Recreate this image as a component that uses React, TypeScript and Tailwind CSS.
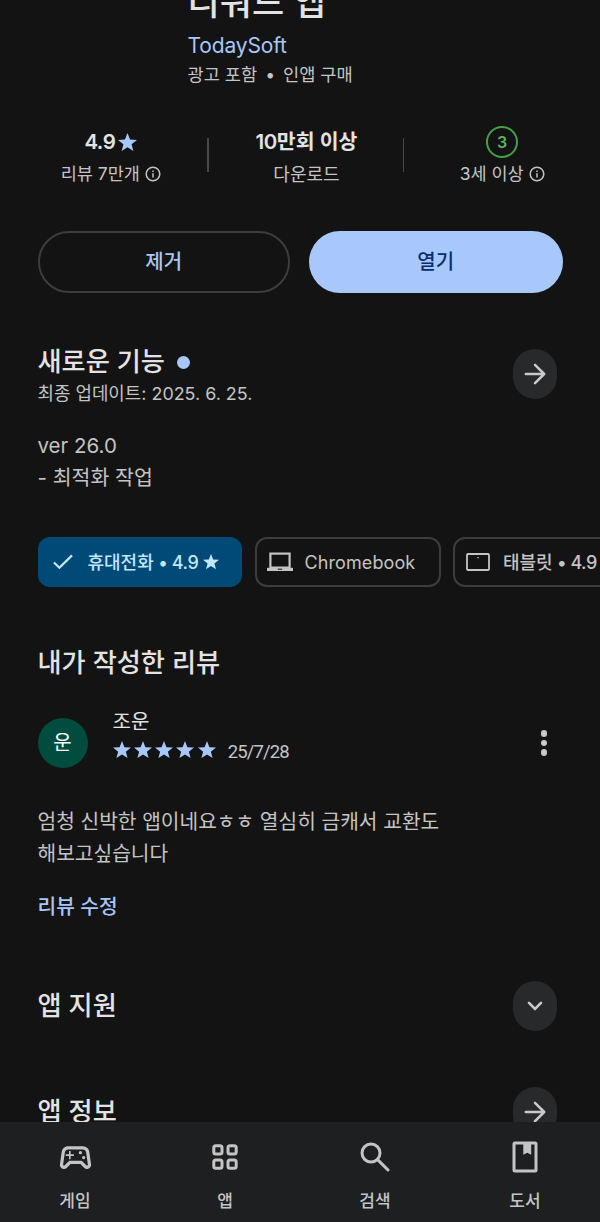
import { ReactNode } from 'react'
import { MdOutlineSportsEsports } from 'react-icons/md'

function Star({ className }: { className: string }) {
	return (
		<svg viewBox="0 0 20 19" className={className} fill="currentColor">
			<path d="M10 0l2.7 6.9L20 7.3l-5.7 4.6L16.2 19 10 15 3.8 19l1.9-7.1L0 7.3l7.3-.4z" />
		</svg>
	)
}

function Info() {
	return (
		<svg viewBox="0 0 16 16" className="size-4" fill="none" stroke="currentColor" strokeWidth="1.5">
			<circle cx="8" cy="8" r="6.8" />
			<path d="M8 7.2v4.2M8 4.4v1.5" />
		</svg>
	)
}

function RoundButton({ children, label }: { children: ReactNode, label: string }) {
	return (
		<button aria-label={label} className="flex h-[50px] w-11 shrink-0 items-center justify-center rounded-full bg-[#28292b] text-[#c9c9c9]">
			{children}
		</button>
	)
}

function Arrow() {
	return (
		<svg viewBox="0 0 22 22" className="size-[22px]" fill="none" stroke="currentColor" strokeWidth="2.5" strokeLinecap="round" strokeLinejoin="round">
			<path d="M1.8 11h18.4M11 1.8l9.2 9.2-9.2 9.2" />
		</svg>
	)
}

function LaptopIcon() {
	return (
		<svg viewBox="0 0 26 20" className="h-5 w-[26px]" fill="none" stroke="currentColor">
			<rect x="3.4" y="1.6" width="19.2" height="14" strokeWidth="2.2" />
			<path d="M0 15.8h26v3.2H0z" fill="currentColor" stroke="none" />
			<path d="M10.8 17.2h4.4" stroke="#131313" strokeWidth="1" />
		</svg>
	)
}

function AppsIcon() {
	return (
		<svg viewBox="0 0 26 26" className="size-[26px]" fill="none" stroke="currentColor" strokeWidth="3">
			<rect x="1.8" y="1.8" width="8.2" height="8.2" rx="2" />
			<rect x="16" y="1.8" width="8.2" height="8.2" rx="2" />
			<rect x="1.8" y="16" width="8.2" height="8.2" rx="2" />
			<rect x="16" y="16" width="8.2" height="8.2" rx="2" />
		</svg>
	)
}

function SearchIcon() {
	return (
		<svg viewBox="0 0 30 30" className="size-[30px]" fill="none" stroke="currentColor" strokeWidth="3" strokeLinecap="round">
			<circle cx="11" cy="11" r="9" />
			<path d="M17.6 17.6L28 28" />
		</svg>
	)
}

function BookIcon() {
	return (
		<svg viewBox="0 0 26 32" className="h-8 w-[26px]" fill="none" stroke="currentColor" strokeWidth="3">
			<rect x="2" y="2" width="22" height="28" rx="1" />
			<path d="M11.3 2h7.9v11.8l-3.95-2-3.95 2z" fill="currentColor" stroke="none" />
		</svg>
	)
}

const tabs = [
	{ label: '게임', icon: <MdOutlineSportsEsports className="size-[39px]" /> },
	{ label: '앱', icon: <AppsIcon /> },
	{ label: '검색', icon: <SearchIcon /> },
	{ label: '도서', icon: <BookIcon /> },
]

export default function App() {
	return (
		<div className="flex h-[1222px] w-[600px] flex-col overflow-hidden bg-[#131313] font-['Inter','Noto_Sans_CJK_KR',sans-serif] text-[#c4c4c4]">

			<main className="h-[1122px] shrink-0 overflow-hidden">
				<header className="-mt-[22px] pl-[187.5px]">
					<h1 className="h-[52px] text-[35px] leading-[48px] font-medium text-[#e3e3e3]">리워드 앱</h1>
					<p className="h-8 text-[21px] leading-8 tracking-[-0.15px] text-[#a8c7fa]">TodaySoft</p>
					<p className="text-[17.6px] leading-[26px]">광고 포함 <span className="mx-[3px]">•</span> 인앱 구매</p>
				</header>

				<section className="mt-[38px] ml-[13px] grid h-[62px] grid-cols-3 text-center">
					<div className="relative flex flex-col items-center">
						<div className="flex h-8 items-center gap-[3px] text-[20.5px] font-semibold tracking-[-0.5px] text-[#e3e3e3]">
							4.9 <Star className="w-[19px] text-[#a8c7fa]" />
						</div>
						<div className="flex h-8 items-center gap-[5px] text-[17.5px]">리뷰 7만개 <Info /></div>
						<i className="absolute top-[12px] right-0 h-[34px] w-[1.5px] bg-[#484848]" />
					</div>
					<div className="relative flex flex-col items-center">
						<div className="flex h-8 items-center text-[20.5px] font-semibold text-[#e3e3e3]"><span className="tracking-[-0.5px]">10</span>만회 이상</div>
						<div className="flex h-8 items-center text-[18px]">다운로드</div>
						<i className="absolute top-[12px] right-0 h-[34px] w-[1.5px] bg-[#484848]" />
					</div>
					<div className="flex flex-col items-center">
						<div className="flex h-8 w-8 items-center justify-center rounded-full border-[2.5px] border-[#43a047] text-base font-semibold text-[#5bb360]">3</div>
						<div className="flex h-8 items-center gap-[5px] text-[17.5px]">3세 이상 <Info /></div>
					</div>
				</section>

				<section className="mt-[43px] flex justify-between px-[37.5px]">
					<button className="h-[62px] w-[252.5px] rounded-full border-2 border-[#3d3d3d] text-[20px] font-medium text-[#a8c7fa]">제거</button>
					<button className="h-[62px] w-[253.5px] rounded-full bg-[#a8c7fa] text-[20px] font-medium text-[#062e6f]">열기</button>
				</section>

				<section className="mt-[54px] pl-[37.5px]">
					<div className="flex h-[60px] justify-between pr-[43px]">
						<div>
							<h2 className="flex h-[30px] items-center gap-3 text-[26.2px] font-medium text-[#e3e3e3]">
								새로운 기능 <i className="size-[13px] rounded-full bg-[#a8c7fa]" />
							</h2>
							<p className="text-[17.9px] leading-[33px]">최종 업데이트: 2025. 6. 25.</p>
						</div>
						<div className="mt-[2px]"><RoundButton label="새로운 기능"><Arrow /></RoundButton></div>
					</div>
					<p className="mt-[23px] text-[20.5px] leading-8">
						ver 26.0<br />- 최적화 작업
					</p>
				</section>

				<section className="mt-[43px] flex gap-[12.5px] pl-[37.5px] text-[18px] font-medium">
					<div className="flex h-[50px] w-[204.5px] shrink-0 items-center rounded-xl bg-[#004a77] pl-[15px] text-[#c2e7ff]">
						<svg viewBox="0 0 20 16" className="w-5" fill="none" stroke="currentColor" strokeWidth="2.2"><path d="M1 8.5l5.4 5.3L19 1.4" /></svg>
						<span className="ml-[15px] whitespace-nowrap">휴대전화<span className="tracking-[-0.4px]"> • 4.9</span></span>
						<Star className="ml-[5px] w-4" />
					</div>
					<div className="flex h-[50px] w-[186px] shrink-0 items-center rounded-xl border-2 border-[#3d3d3d] pl-2.5">
						<LaptopIcon />
						<span className="ml-3 font-normal tracking-[0.1px]">Chromebook</span>
					</div>
					<div className="flex h-[50px] w-[204px] shrink-0 items-center rounded-xl border-2 border-[#3d3d3d] pl-[11px]">
						<svg viewBox="0 0 24 18" className="w-6" fill="none" stroke="currentColor" strokeWidth="1.8">
							<rect x="1" y="1" width="22" height="16" rx="1" />
							<path d="M11.3 4.6h1.4" strokeWidth="1.2" />
						</svg>
						<span className="ml-[13px] whitespace-nowrap">태블릿<span className="tracking-[-0.5px]"> • 4.9</span></span>
					</div>
				</section>

				<section className="mt-[60px] pr-[43px] pl-[37.5px]">
					<h2 className="text-[26.2px] leading-8 font-medium text-[#e3e3e3]">내가 작성한 리뷰</h2>
					<div className="mt-[29px] flex h-[70px] items-center">
						<div className="flex size-[50px] items-center justify-center rounded-full bg-[#004d40] text-[20px] text-white">운</div>
						<div className="ml-[25px] h-[62px] flex-1">
							<p className="h-[27px] text-[20px] leading-[20px] text-[#e3e3e3]">조운</p>
							<div className="flex h-[22px] items-center">
								<div className="flex gap-[3.3px] text-[#a8c7fa]">
									{[1, 2, 3, 4, 5].map(n => <Star key={n} className="w-[18px]" />)}
								</div>
								<span className="mt-[5px] ml-3 font-['Roboto'] text-[18.5px] tracking-[-0.9px]">25/7/28</span>
							</div>
						</div>
						<button aria-label="더보기" className="mr-2.5 flex flex-col gap-[3px]">
							<i className="size-[6.5px] rounded-full bg-[#c9c9c9]" />
							<i className="size-[6.5px] rounded-full bg-[#c9c9c9]" />
							<i className="size-[6.5px] rounded-full bg-[#c9c9c9]" />
						</button>
					</div>
					<p className="mt-[28px] text-[20.3px] leading-[31.5px]">
						엄청 신박한 앱이네요ㅎㅎ 열심히 금캐서 교환도<br />해보고싶습니다
					</p>
					<a className="mt-[22px] block text-[20.3px] leading-8 font-medium text-[#a8c7fa]">리뷰 수정</a>
				</section>

				<section className="mt-[58px] flex h-[50px] items-center justify-between pr-[43px] pl-[37.5px]">
					<h2 className="text-[26.2px] font-medium text-[#e3e3e3]">앱 지원</h2>
					<RoundButton label="펼치기">
						<svg viewBox="0 0 16 10" className="w-4" fill="none" stroke="currentColor" strokeWidth="2.6" strokeLinecap="round"><path d="M2 1.8l6 6 6-6" /></svg>
					</RoundButton>
				</section>

				<section className="mt-[56px] flex h-[50px] items-center justify-between pr-[43px] pl-[37.5px]">
					<h2 className="text-[26.2px] font-medium text-[#e3e3e3]">앱 정보</h2>
					<RoundButton label="앱 정보"><Arrow /></RoundButton>
				</section>
			</main>

			<nav className="grid h-[100px] shrink-0 grid-cols-4 bg-[#1e1f20]">
				{tabs.map(tab => (
					<div key={tab.label} className="flex flex-col items-center pt-[15px]">
						<div className="flex h-10 items-center">{tab.icon}</div>
						<span className="mt-[12px] text-[17px] leading-6 font-medium">{tab.label}</span>
					</div>
				))}
			</nav>
		</div>
	)
}
